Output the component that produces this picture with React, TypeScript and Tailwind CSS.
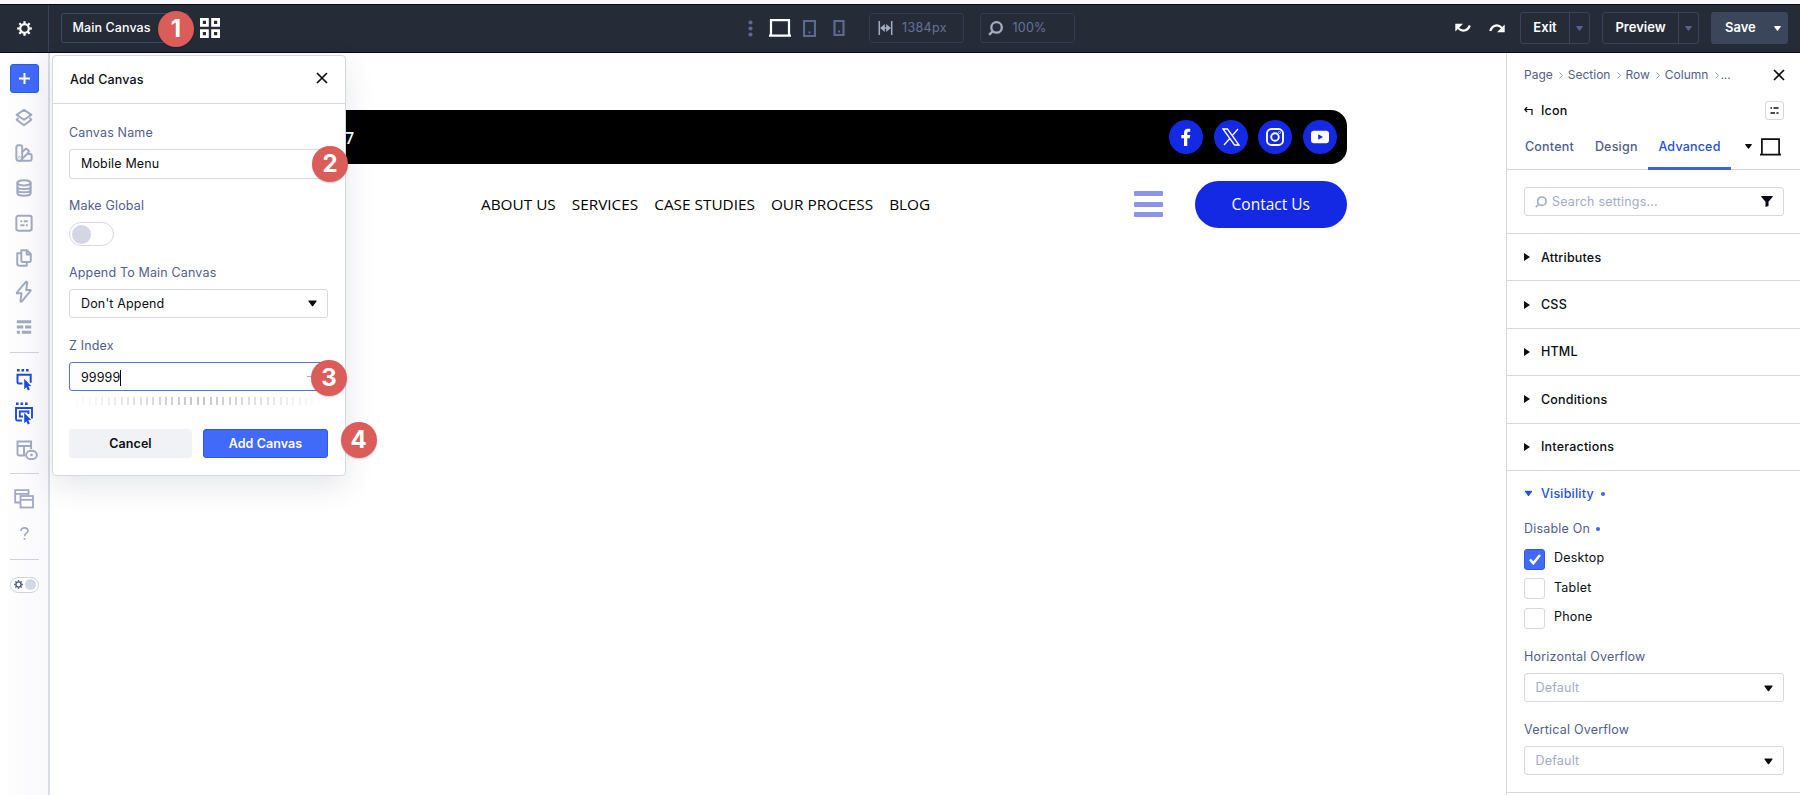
import React from 'react';

const Gear: React.FC<{ size: number; className?: string }> = ({ size, className }) => (
  <svg width={size} height={size} viewBox="0 0 16 16" fill="none" stroke="currentColor" className={className}>
    <circle cx="8" cy="8" r="4.6" strokeWidth="2.4" />
    {[0, 45, 90, 135, 180, 225, 270, 315].map((a) => (
      <path key={a} d="M8 0.2v2.6" strokeWidth="2.4" transform={`rotate(${a} 8 8)`} />
    ))}
  </svg>
);

const Caret: React.FC<{ className?: string }> = ({ className }) => (
  <svg width="9" height="7" viewBox="0 0 9 7" fill="currentColor" className={className}>
    <path d="M1 .5h7c.6 0 .8.5.4 1L5.1 6c-.3.4-.9.4-1.2 0L.6 1.5C.2 1 .4.5 1 .5z" />
  </svg>
);

const Close: React.FC = () => (
  <svg width="12" height="12" viewBox="0 0 12 12" fill="none" stroke="#0b0d12" strokeWidth="1.7">
    <path d="M1 1l10 10M11 1L1 11" />
  </svg>
);

const Laptop: React.FC<{ className?: string; width: number; stroke: number }> = ({ className, width, stroke }) => (
  <svg width={width} height="18" viewBox="0 0 22 18" preserveAspectRatio="none" fill="none" stroke="currentColor" strokeWidth={stroke} className={className}>
    <path d="M2 16V1.2h18V16M0 16.6h22" />
  </svg>
);

const Magnifier: React.FC<{ size: number; stroke: number; className?: string }> = ({ size, stroke, className }) => (
  <svg width={size} height={size} viewBox="0 0 14 14" fill="none" stroke="currentColor" strokeWidth={stroke} className={className}>
    <circle cx="8" cy="6" r="4.9" />
    <path d="M4.4 9.6L1 13" />
  </svg>
);

const sidebarTop = [
  // layers
  <g key="layers">
    <path d="M10 1l8.200 5.500-8.200 5.500-8.200-5.500z" />
    <path d="M3.800 10L1.800 12l8.200 6 8.200-6-2-2" />
  </g>,
  // swatches
  <g key="swatches">
    <path d="M1.500 3.500a2 2 0 0 1 2-2h2.500a2 2 0 0 1 2 2v12a3.200 3.200 0 0 1-6.500 0z" />
    <path d="M8 9l3.200-3.200a1.600 1.600 0 0 1 2.300 0l1.500 1.400c.7.700.6 1.600 0 2.300L8 16.500M13.600 11h3c1.100 0 1.900.7 1.900 1.700v3.600c0 1.200-.8 2.200-1.900 2.200H5" />
    <circle cx="4.800" cy="14.800" r=".3" />
  </g>,
  // database
  <g key="database">
    <ellipse cx="10" cy="4.300" rx="7.400" ry="2.900" />
    <path d="M2.600 4.300v11.400c0 1.600 3.200 2.900 7.400 2.900s7.400-1.300 7.400-2.900V4.300M2.600 8.200C2.600 9.800 5.800 11 10 11s7.400-1.200 7.400-2.800M2.600 12c0 1.600 3.200 2.800 7.400 2.800s7.400-1.200 7.400-2.800" />
  </g>,
  // form
  <g key="form">
    <rect x="1.500" y="2" width="17" height="16.500" rx="2" />
    <path d="M6 8h2M9.700 8h4.500M6 12.400h4.500M12.200 12.400h2" />
  </g>,
  // pages
  <g key="pages">
    <path d="M7 1.500h6.500l4 4V13a1.500 1.500 0 0 1-1.500 1.500H8.500A1.500 1.500 0 0 1 7 13zM7 4.800H2.500V16.500a2 2 0 0 0 2 2H13v-3.800" />
    <path d="M13 1.800v4.200h4.200" />
  </g>,
  // bolt
  <path key="bolt" d="M11.600-.8L2.200 10.400c-.5.600-.2 1.100.4 1.100h4.700L6.100 19.700c-.1 1.200.9 1.500 1.500.6l9.600-11.500c.5-.7.2-1.100-.4-1.100h-4.400l1.200-8c.1-1.300-1.300-1.400-2-.5z" />,
  // wireframe
  <path key="wireframe" strokeWidth="3.400" strokeLinecap="butt" d="M2 4.200h16M2 10h7.200M11.200 10h6.800M2 15.800h3.400M7.600 15.800h10.400" />,
];

const Selection: React.FC<{ double?: boolean }> = ({ double }) => (
  <svg width="20" height="24" viewBox="0 0 20 24" fill="none" stroke="#1f4bdb" className="overflow-visible">
    {double ? (
      <g>
        <path d="M2 2.800h2.600M6.500 2.800h2.600M11 2.800h2.600" strokeWidth="2.400" />
        <path d="M8 19.500H3.500c-1 0-1.500-.5-1.500-1.500V7h16v10.500" strokeWidth="1.900" />
        <path d="M9 15.500H5.800v-5h8.700V13" strokeWidth="1.800" />
      </g>
    ) : (
      <g>
        <path d="M3 3.200h2.600M7.500 3.200h2.600M12 3.200h2.600" strokeWidth="2.400" />
        <path d="M8.500 16.500H4.700c-.8 0-1.200-.4-1.200-1.200V7.800h13.200v8" strokeWidth="2" />
      </g>
    )}
    <path d="M10.200 11.800l7 7.200-3 .3 1.700 3.200-2 1-1.600-3.300-2.100 2z" fill="#1f4bdb" stroke="none" />
  </svg>
);

const Rule: React.FC = () => <div className="h-px w-[29px] shrink-0 bg-[#cfd2de]" />;

const Sidebar: React.FC = () => (
  <aside className="flex w-[50px] shrink-0 flex-col items-center border-r-2 border-[#dadce4] bg-gradient-to-r from-white to-[#f9f9fc] pt-[11px] text-[#a0a8c2]">
    <button className="flex size-[29px] shrink-0 items-center justify-center rounded-[3px] border border-[#2b59ea] bg-[#4169fa]">
      <svg width="11" height="11" viewBox="0 0 11 11" stroke="#fff" strokeWidth="2">
        <path d="M5.500 0v11M0 5.500h11" />
      </svg>
    </button>
    <div className="mt-[8px] flex flex-col">
      {sidebarTop.map((icon, i) => (
        <div key={i} className="flex h-[34.800px] items-center justify-center">
          <svg width="18" height="18" viewBox="0 0 20 20" fill="none" stroke="currentColor" strokeWidth="2.200" strokeLinejoin="round" className="overflow-visible">
            {icon}
          </svg>
        </div>
      ))}
    </div>
    <div className="h-[7px]" />
    <Rule />
    <div className="mt-[14px] flex h-[24px] items-center"><Selection /></div>
    <div className="mt-[10px] flex h-[24px] items-center"><Selection double /></div>
    <div className="ml-[6px] mt-[15px] h-[20px]">
      <svg width="22" height="20" viewBox="0 0 22 20" fill="none" stroke="currentColor" strokeWidth="1.900">
        <path d="M9 15.500H3a1.500 1.500 0 0 1-1.500-1.500V1.500h13.600V9M1.500 6h13.600M8 6v9.500" />
        <ellipse cx="15.500" cy="15" rx="5.400" ry="4.200" />
        <circle cx="15.500" cy="15" r="1.300" fill="currentColor" stroke="none" />
      </svg>
    </div>
    <div className="h-[13px]" />
    <Rule />
    <div className="mt-[15.500px] h-[20px]">
      <svg width="20" height="20" viewBox="0 0 20 20" fill="none" stroke="currentColor" strokeWidth="1.800">
        <path d="M6 13.500H1.200V1.200h13.300v5M1 4.800h13.500" />
        <rect x="6.500" y="7" width="12.500" height="11.500" />
        <path d="M6.500 10.800H19" />
      </svg>
    </div>
    <div className="mt-[14px] h-[20px]">
      <svg width="9" height="13" viewBox="0 0 9 13" fill="none" stroke="currentColor" strokeWidth="1.600" className="mt-[4px]">
        <path d="M1 4C1 2 2.500.9 4.500.9S8 2 8 3.800C8 6 4.500 6.200 4.500 9.200M4.500 11v1.800" />
      </svg>
    </div>
    <div className="h-[15.500px]" />
    <Rule />
    <div className="mt-[17px] flex h-[16px] w-[29px] shrink-0 items-center justify-between rounded-full border border-[#cfd2de] bg-white pl-[3px] pr-[2px]">
      <Gear size={9} className="text-[#46557f]" />
      <span className="size-[11px] rounded-full bg-[#d4d8e6]" />
    </div>
  </aside>
);

const Header: React.FC = () => (
  <header className="flex h-[53px] shrink-0 border-t-4 border-[#f8f8fa]">
    <div className="flex w-full items-center border-y border-[#070a10] bg-[#252c38] pb-px text-[12.500px] font-medium text-white">
      <div className="-mb-px flex h-[47px] w-[49px] items-center justify-center border-r border-[#3a4458]">
        <Gear size={15} />
      </div>
      <div className="ml-[12px] flex h-[30px] w-[128px] items-center rounded-[3px] border border-[#3d4a66] pl-[10.500px] tracking-[0.100px]">
        Main Canvas
      </div>
      <svg width="20" height="20" viewBox="0 0 20 20" fill="none" stroke="#fff" strokeWidth="2.800" className="ml-[11px]">
        <path d="M1.400 1.400h6v6h-6zM12.600 1.400h6v6h-6zM1.400 12.600h6v6h-6zM12.600 12.600h6v6h-6z" />
      </svg>
      <div className="ml-[528px] flex items-center">
        <svg width="5" height="17" viewBox="0 0 5 17" fill="#5c6a8e">
          <circle cx="2.500" cy="2.500" r="2.100" />
          <circle cx="2.500" cy="8.500" r="2.100" />
          <circle cx="2.500" cy="14.500" r="2.100" />
        </svg>
        <Laptop width={22} stroke={2.2} className="ml-[16px]" />
        <svg width="13" height="17" viewBox="0 0 13 17" fill="none" stroke="#5c6a93" strokeWidth="2.200" className="ml-[12px]">
          <path d="M1 1h11v15H1zM5.500 12.500h2" />
        </svg>
        <svg width="12" height="16" viewBox="0 0 11 16" fill="none" stroke="#5c6a93" strokeWidth="2.200" className="ml-[17px]">
          <path d="M1 1h9v14H1zM4.500 11.500h2" />
        </svg>
      </div>
      <div className="ml-[24px] flex h-[30px] w-[95px] items-center rounded-[3px] border border-[#37415a]/70 pl-[8px] text-[12.500px] font-normal text-[#65739b]">
        <svg width="15" height="14" viewBox="0 0 14 14" fill="none" stroke="#a3acc6" strokeWidth="1.500">
          <path d="M.8 0v14M13.200 0v14M3 7h8" />
          <path d="M6.300 3v8L1.600 7zM7.700 3v8L12.400 7z" fill="#a3acc6" stroke="none" />
        </svg>
        <span className="ml-[9px] tracking-[0.350px]">1384px</span>
      </div>
      <div className="ml-[16px] flex h-[30px] w-[95px] items-center rounded-[3px] border border-[#37415a]/70 pl-[7px] text-[12.500px] font-normal text-[#65739b]">
        <Magnifier size={15} stroke={2.2} className="text-[#a3acc6]" />
        <span className="ml-[9.500px] tracking-[0.250px]">100%</span>
      </div>
      <div className="ml-auto flex items-center pr-[12px]">
        <svg width="16" height="10" viewBox="0 0 16 10" fill="none" stroke="#fff" strokeWidth="2.200">
          <path d="M3 5c4 4 9.500 3.500 11.800-2.500" />
          <path d="M.3.800v7.600l2-1.800L8 .800z" fill="#fff" stroke="none" />
        </svg>
        <svg width="16" height="10" viewBox="0 0 16 10" fill="none" stroke="#fff" strokeWidth="2.200" className="ml-[18px]">
          <path d="M1.200 8C3.500 1.500 9 1 13 5" />
          <path d="M15.700 9.200V1.600l-2 1.800L8 9.200z" fill="#fff" stroke="none" />
        </svg>
        <div className="ml-[15px] flex h-[32px] w-[70px] rounded-[3px] border border-[#3a4458] text-[13px] font-semibold">
          <span className="flex w-[49px] items-center justify-center border-r border-[#3a4458]">Exit</span>
          <span className="flex flex-1 items-center justify-center"><Caret className="scale-80 text-[#53638c]" /></span>
        </div>
        <div className="ml-[12px] flex h-[32px] w-[97px] rounded-[3px] border border-[#3a4458] text-[13px] font-semibold">
          <span className="flex w-[76px] items-center justify-center border-r border-[#3a4458]">Preview</span>
          <span className="flex flex-1 items-center justify-center"><Caret className="scale-80 text-[#53638c]" /></span>
        </div>
        <div className="ml-[12px] flex h-[32px] w-[77px] items-center rounded-[3px] bg-[#3b465b] pl-[14px] text-[13px] font-semibold">
          Save
          <Caret className="ml-auto mr-[6px] scale-80" />
        </div>
      </div>
    </div>
  </header>
);

const socials = [
  <path key="fb" fill="#fff" d="M7 18v-7.700H4.300V7H7V4.900C7 2.200 8.500.8 10.900.8c1.300 0 2.300.1 2.300.1v2.900h-1.400c-1.200 0-1.500.7-1.500 1.500V7h2.900l-.5 3.300h-2.400V18z" />,
  <path key="x" fill="none" stroke="#fff" strokeWidth="1.300" d="M1 1h4.500L17 17h-4.500zM16 1L9.800 8.200M8.200 10L2 17" />,
  <g key="ig" fill="none" stroke="#fff" strokeWidth="1.900">
    <rect x="1" y="1" width="16" height="16" rx="4.500" />
    <circle cx="9" cy="9" r="3.800" />
    <circle cx="13.500" cy="4.500" r=".3" />
  </g>,
  <path key="yt" fill="#fff" fillRule="evenodd" d="M3 2.800h12c2 0 3 1 3 3v6.400c0 2-1 3-3 3H3c-2 0-3-1-3-3V5.800c0-2 1-3 3-3zM7.200 6.200v5.600L12 9z" />,
];

const links = ['ABOUT US', 'SERVICES', 'CASE STUDIES', 'OUR PROCESS', 'BLOG'];

const Site: React.FC = () => (
  <main className="min-w-0 flex-1 bg-white pl-[160px] pt-[57px] font-['Open_Sans',sans-serif]">
    <div className="flex h-[54px] w-[1136.500px] items-center rounded-[16px] bg-black pr-[10px]">
      <span className="ml-[135px] mt-[2px] text-[16px] font-semibold text-white">7</span>
      <div className="ml-auto flex gap-[10.500px]">
        {socials.map((s, i) => (
          <span key={i} className="flex size-[34px] items-center justify-center rounded-full bg-[#1429e4]">
            <svg width="18" height="18" viewBox="0 0 18 18">{s}</svg>
          </span>
        ))}
      </div>
    </div>
    <div className="mt-[16.500px] flex h-[47px] w-[1136.500px] items-center">
      <nav className="ml-[271px] mt-px flex gap-[16px] text-[15.350px] font-[450] text-black">
        {links.map((l) => (
          <a key={l}>{l}</a>
        ))}
      </nav>
      <div className="ml-auto flex w-[29.500px] flex-col gap-[5.500px]">
        <span className="h-[5px] rounded-[1px] bg-[#8a94ea]" />
        <span className="h-[5px] rounded-[1px] bg-[#8a94ea]" />
        <span className="h-[5px] rounded-[1px] bg-[#8a94ea]" />
      </div>
      <a className="ml-[32px] flex h-full w-[151.500px] items-center justify-center rounded-full bg-[#1429e4] pt-px text-[15.500px] font-[450] text-white">
        Contact Us
      </a>
    </div>
  </main>
);

const sections = ['Attributes', 'CSS', 'HTML', 'Conditions', 'Interactions'];
const devices = [
  { name: 'Desktop', checked: true },
  { name: 'Tablet', checked: false },
  { name: 'Phone', checked: false },
];

const SelectField: React.FC<{ label: string; className: string }> = ({ label, className }) => (
  <div className={className}>
    <div className="h-[20px] leading-[21px] text-[#525e88]">{label}</div>
    <div className="mt-[7px] flex h-[29.500px] items-center justify-between rounded-[3px] border border-[#d6d8e0] pl-[10.500px] pr-[10px] pt-px text-[#a3abc4]">
      Default
      <Caret className="text-[#0b0d12]" />
    </div>
  </div>
);

const Settings: React.FC = () => (
  <aside className="flex w-[294px] shrink-0 flex-col border-l border-[#d6d8e0] bg-white text-[12.500px] tracking-[0.200px]">
    <div className="flex h-[44px] items-center pl-[17px] pr-[15px] text-[12px] tracking-[0px] text-[#525e88]">
      {['Page', 'Section', 'Row', 'Column'].map((c) => (
        <React.Fragment key={c}>
          <span>{c}</span>
          <svg width="4" height="7" viewBox="0 0 4 7" fill="none" stroke="#8f98b5" className={c === 'Column' ? 'ml-[7px] mr-px' : 'ml-[6.500px] mr-[4.500px]'}>
            <path d="M.5.500l3 3-3 3" />
          </svg>
        </React.Fragment>
      ))}
      <span>...</span>
      <span className="ml-auto"><Close /></span>
    </div>
    <div className="flex h-[27px] items-center pl-[17px] pr-[16px]">
      <svg width="9" height="8" viewBox="0 0 9 8" fill="none" stroke="#0b0d12" strokeWidth="1.200">
        <path d="M1 2.500h7V8M3 0L.8 2.500 3 5" />
      </svg>
      <span className="ml-[8px] mt-[2px] font-medium text-[#0b0d12]">Icon</span>
      <span className="ml-auto flex size-[19px] items-center justify-center rounded-[3px] border border-[#d6d8e0]">
        <svg width="9" height="7" viewBox="0 0 9 7" stroke="#0b0d12" strokeWidth="1.600">
          <path d="M.5 1h1.500M3.500 1h5M.5 6h4.500M6.500 6h2" />
        </svg>
      </span>
    </div>
    <div className="flex h-[46px] items-stretch border-b border-[#d3d6e0] pl-[18px] font-medium text-[#525e88]">
      <span className="flex items-center pt-[2px]">Content</span>
      <span className="ml-[21px] flex items-center pt-[2px]">Design</span>
      <span className="-mb-px ml-auto flex w-[83px] items-center justify-center border-b-3 border-[#3c63dd] pt-[4px] text-[#2450dc]">Advanced</span>
      <span className="ml-[13px] mr-[19px] flex items-center text-[#0b0d12]">
        <Caret className="scale-80" />
        <Laptop width={21} stroke={1.8} className="ml-[7px]" />
      </span>
    </div>
    <div className="flex h-[64px] items-center border-b border-[#d6d8e0] pl-[17px] pr-[16px]">
      <div className="flex h-[29px] flex-1 items-center rounded-[3px] border border-[#d6d8e0] px-[10px] text-[#a3abc4]">
        <Magnifier size={12} stroke={1.9} />
        <span className="ml-[5px] mt-px">Search settings...</span>
        <svg width="12" height="11" viewBox="0 0 12 11" fill="#0b0d12" className="ml-auto">
          <path d="M.8 0h10.400c.6 0 .8.500.4 1L7.500 5.800V10L4.500 11V5.800L.4 1C0 .500.2 0 .8 0z" />
        </svg>
      </div>
    </div>
    {sections.map((s) => (
      <div key={s} className="flex h-[47.400px] shrink-0 items-center border-b border-[#d6d8e0] pl-[17px] font-medium text-[#0b0d12]">
        <svg width="6" height="8" viewBox="0 0 6 8" fill="currentColor"><path d="M0 0l6 4-6 4z" /></svg>
        <span className="ml-[11px] mt-[1.500px]">{s}</span>
      </div>
    ))}
    <div className="flex h-[322px] shrink-0 flex-col border-b border-[#d6d8e0] pl-[17px] pr-[16px]">
      <div className="flex h-[46px] items-center font-medium text-[#2450dc]">
        <Caret className="scale-90" />
        <span className="ml-[8px] mt-px">Visibility</span>
        <span className="ml-[7px] mt-px size-[4px] rounded-full bg-[#3c63f0]" />
      </div>
      <div className="mt-[2px] flex h-[20px] items-center pt-px text-[#525e88]">
        Disable On
        <span className="ml-[6px] size-[4px] rounded-full bg-[#3c63f0]" />
      </div>
      <div className="mt-[10px] flex flex-col gap-[8.500px] text-[#0b0d12]">
        {devices.map((d) => (
          <label key={d.name} className="flex h-[21px] items-center">
            {d.checked ? (
              <span className="flex size-[21px] items-center justify-center rounded-[3px] border border-[#2b59ea] bg-[#4169fa]">
                <svg width="12" height="11" viewBox="0 0 12 11" fill="none" stroke="#fff" strokeWidth="2.500">
                  <path d="M1 5.500L4.300 9.300 11 1" />
                </svg>
              </span>
            ) : (
              <span className="size-[21px] rounded-[3px] border border-[#d6d8e0]" />
            )}
            <span className="-mt-[2px] ml-[9px]">{d.name}</span>
          </label>
        ))}
      </div>
      <SelectField label="Horizontal Overflow" className="mt-[17px]" />
      <SelectField label="Vertical Overflow" className="mt-[16.500px]" />
    </div>
  </aside>
);

const AddCanvas: React.FC = () => (
  <div className="absolute left-[52px] top-[55px] flex h-[421px] w-[294px] flex-col rounded-[4px] border border-[#d6d8e0] bg-white text-[12.500px] tracking-[0.160px] text-[#0b0d12] shadow-[0_10px_30px_rgba(40,50,90,0.12)]">
    <div className="flex h-[48px] items-center justify-between border-b border-[#d6d8e0] px-[17px]">
      <span className="mt-[2px] font-medium">Add Canvas</span>
      <span className="-mt-[3px]"><Close /></span>
    </div>
    <div className="flex flex-col pl-[16px] pr-[17px] pt-[18px]">
      <div className="h-[20px] leading-[22px] text-[#525e88]">Canvas Name</div>
      <div className="mt-[7px] flex h-[30px] items-center rounded-[3px] border border-[#d6d8e0] pl-[11px] pt-px">Mobile Menu</div>
      <div className="mt-[16px] h-[20px] leading-[22px] text-[#525e88]">Make Global</div>
      <div className="mt-[7px] flex h-[24px] w-[45px] items-center rounded-full border border-[#d6d8e0] pl-[2px]">
        <span className="size-[19px] rounded-full bg-[#d2d6e5]" />
      </div>
      <div className="mt-[16px] h-[20px] leading-[22px] text-[#525e88]">Append To Main Canvas</div>
      <div className="mt-[7px] flex h-[29px] items-center justify-between rounded-[3px] border border-[#d6d8e0] pl-[11px] pr-[10px]">
        <span className="mt-[2px]">Don't Append</span>
        <Caret />
      </div>
      <div className="mt-[17px] h-[20px] leading-[22px] text-[#525e88]">Z Index</div>
      <div className="mt-[7px] flex h-[29px] items-center rounded-[3px] border border-[#5377cf] pl-[11px]">
        <span className="mt-[2px] border-r border-[#0b0d12] leading-[16px] tracking-[0.100px]">99999</span>
        <span className="ml-auto mr-[14px] h-px w-[6px] bg-[#a3abc4]" />
      </div>
      <div className="mt-[6px] flex h-[8px] justify-between pl-[7px] pr-[8px]">
        {Array.from({ length: 39 }, (_, i) => (
          <span key={i} className="w-[2px] bg-[#c4c6cc]" style={{ opacity: 1 - Math.abs(i - 19) / 20 }} />
        ))}
      </div>
      <div className="mt-[24px] flex h-[29px] gap-[11px] font-semibold tracking-[0.080px]">
        <button className="flex-1 rounded-[3px] bg-[#f1f2f5] pt-px">Cancel</button>
        <button className="flex-1 rounded-[3px] border border-[#2b59ea] bg-[#4169fa] pt-px text-white">Add Canvas</button>
      </div>
    </div>
  </div>
);

const badges = [
  { n: 1, place: 'left-[158px] top-[11px]' },
  { n: 2, place: 'left-[312px] top-[146px]' },
  { n: 3, place: 'left-[311px] top-[359.500px]' },
  { n: 4, place: 'left-[340.500px] top-[422px]' },
];

const App: React.FC = () => (
  <div className="relative flex h-[795px] w-[1800px] flex-col overflow-hidden bg-white font-['Inter',sans-serif]">
    <Header />
    <div className="flex min-h-0 flex-1">
      <Sidebar />
      <Site />
      <Settings />
    </div>
    <AddCanvas />
    {badges.map((b) => (
      <span key={b.n} className={`absolute flex size-[36px] items-center justify-center rounded-full bg-[#da5d5a] text-[24px] font-bold text-white shadow-[0_1px_2px_rgba(0,0,0,0.2)] ${b.place}`}>
        {b.n}
      </span>
    ))}
  </div>
);

export default App;
